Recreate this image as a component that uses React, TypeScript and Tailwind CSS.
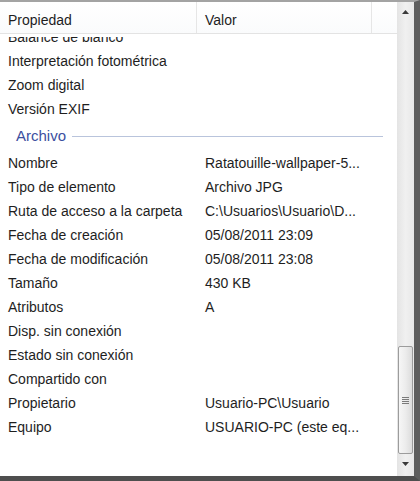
import React from "react";

const before = [
  ["Balance de blanco", ""],
  ["Interpretación fotométrica", ""],
  ["Zoom digital", ""],
  ["Versión EXIF", ""],
];

const after = [
  ["Nombre", "Ratatouille-wallpaper-5..."],
  ["Tipo de elemento", "Archivo JPG"],
  ["Ruta de acceso a la carpeta", "C:\\Usuarios\\Usuario\\D..."],
  ["Fecha de creación", "05/08/2011 23:09"],
  ["Fecha de modificación", "05/08/2011 23:08"],
  ["Tamaño", "430 KB"],
  ["Atributos", "A"],
  ["Disp. sin conexión", ""],
  ["Estado sin conexión", ""],
  ["Compartido con", ""],
  ["Propietario", "Usuario-PC\\Usuario"],
  ["Equipo", "USUARIO-PC (este eq..."],
];

function Row({ k, v, first }: { k: string; v: string; first?: boolean }) {
  return (
    <div className={`flex h-[24px] shrink-0 items-center ${first ? "-mt-[12px]" : ""}`}>
      <div className="w-[197px] shrink-0 pl-2 whitespace-nowrap">{k}</div>
      <div className="pl-2 whitespace-nowrap">{v}</div>
    </div>
  );
}

export default function App() {
  return (
    <div
      className="w-[420px] h-[481px] bg-white border-t-2 border-t-[#a3a3a3] border-r-[6px] border-r-[#5e5e5e] border-b-[5px] border-b-[#4e4e4e] flex text-[14px] text-[#1e1e1e]"
      style={{ fontFamily: '"Liberation Sans", Arial, sans-serif' }}
    >
      <div className="flex-1 flex flex-col overflow-hidden">
        <div className="h-[32px] shrink-0 flex border-b border-[#e3e3e3] bg-gradient-to-b from-white to-[#fafbfc]">
          <div className="w-[197px] shrink-0 pl-2 flex items-center border-r border-[#e6e6e6] pt-[6px]">Propiedad</div>
          <div className="w-[175px] shrink-0 pl-2 flex items-center border-r border-[#e6e6e6] pt-[6px]">Valor</div>
          <div className="flex-1" />
        </div>
        <div className="flex-1 mt-[3px] flex flex-col overflow-hidden">
          {before.map(([k, v], i) => (
            <Row key={k} k={k} v={v} first={i === 0} />
          ))}
          <div className="h-[30px] shrink-0 flex items-center pl-4 pr-[14px]">
            <span className="text-[15px] text-[#3b4f9f] mr-[6px]">Archivo</span>
            <div className="flex-1 h-px bg-[#b9c4dc]" />
          </div>
          {after.map(([k, v]) => (
            <Row key={k} k={k} v={v} />
          ))}
        </div>
      </div>
      <div className="w-[17px] shrink-0 flex flex-col bg-gradient-to-r from-[#e4e4e4] via-[#f0f0f0] to-[#e8e8e8]">
        <div className="h-[18px] shrink-0 flex items-center justify-center pt-[2px]">
          <svg width="7" height="4" viewBox="0 0 7 4">
            <path d="M0 4 L3.5 0 L7 4 Z" fill="#3a3a3a" />
          </svg>
        </div>
        <div className="flex-1" />
        <div className="h-[108px] shrink-0 mx-[1px] rounded-[2px] border border-[#9c9c9c] bg-gradient-to-r from-[#f6f6f6] via-[#ececec] to-[#dcdcdc] flex items-center justify-center">
          <div className="flex flex-col gap-[1px]">
            <div className="w-[7px] h-px bg-[#7a7a7a]" />
            <div className="w-[7px] h-px bg-[#7a7a7a]" />
            <div className="w-[7px] h-px bg-[#7a7a7a]" />
            <div className="w-[7px] h-px bg-[#7a7a7a]" />
          </div>
        </div>
        <div className="h-[22px] shrink-0 flex items-center justify-center pb-[2px]">
          <svg width="7" height="4" viewBox="0 0 7 4">
            <path d="M0 0 L7 0 L3.5 4 Z" fill="#3a3a3a" />
          </svg>
        </div>
      </div>
    </div>
  );
}
